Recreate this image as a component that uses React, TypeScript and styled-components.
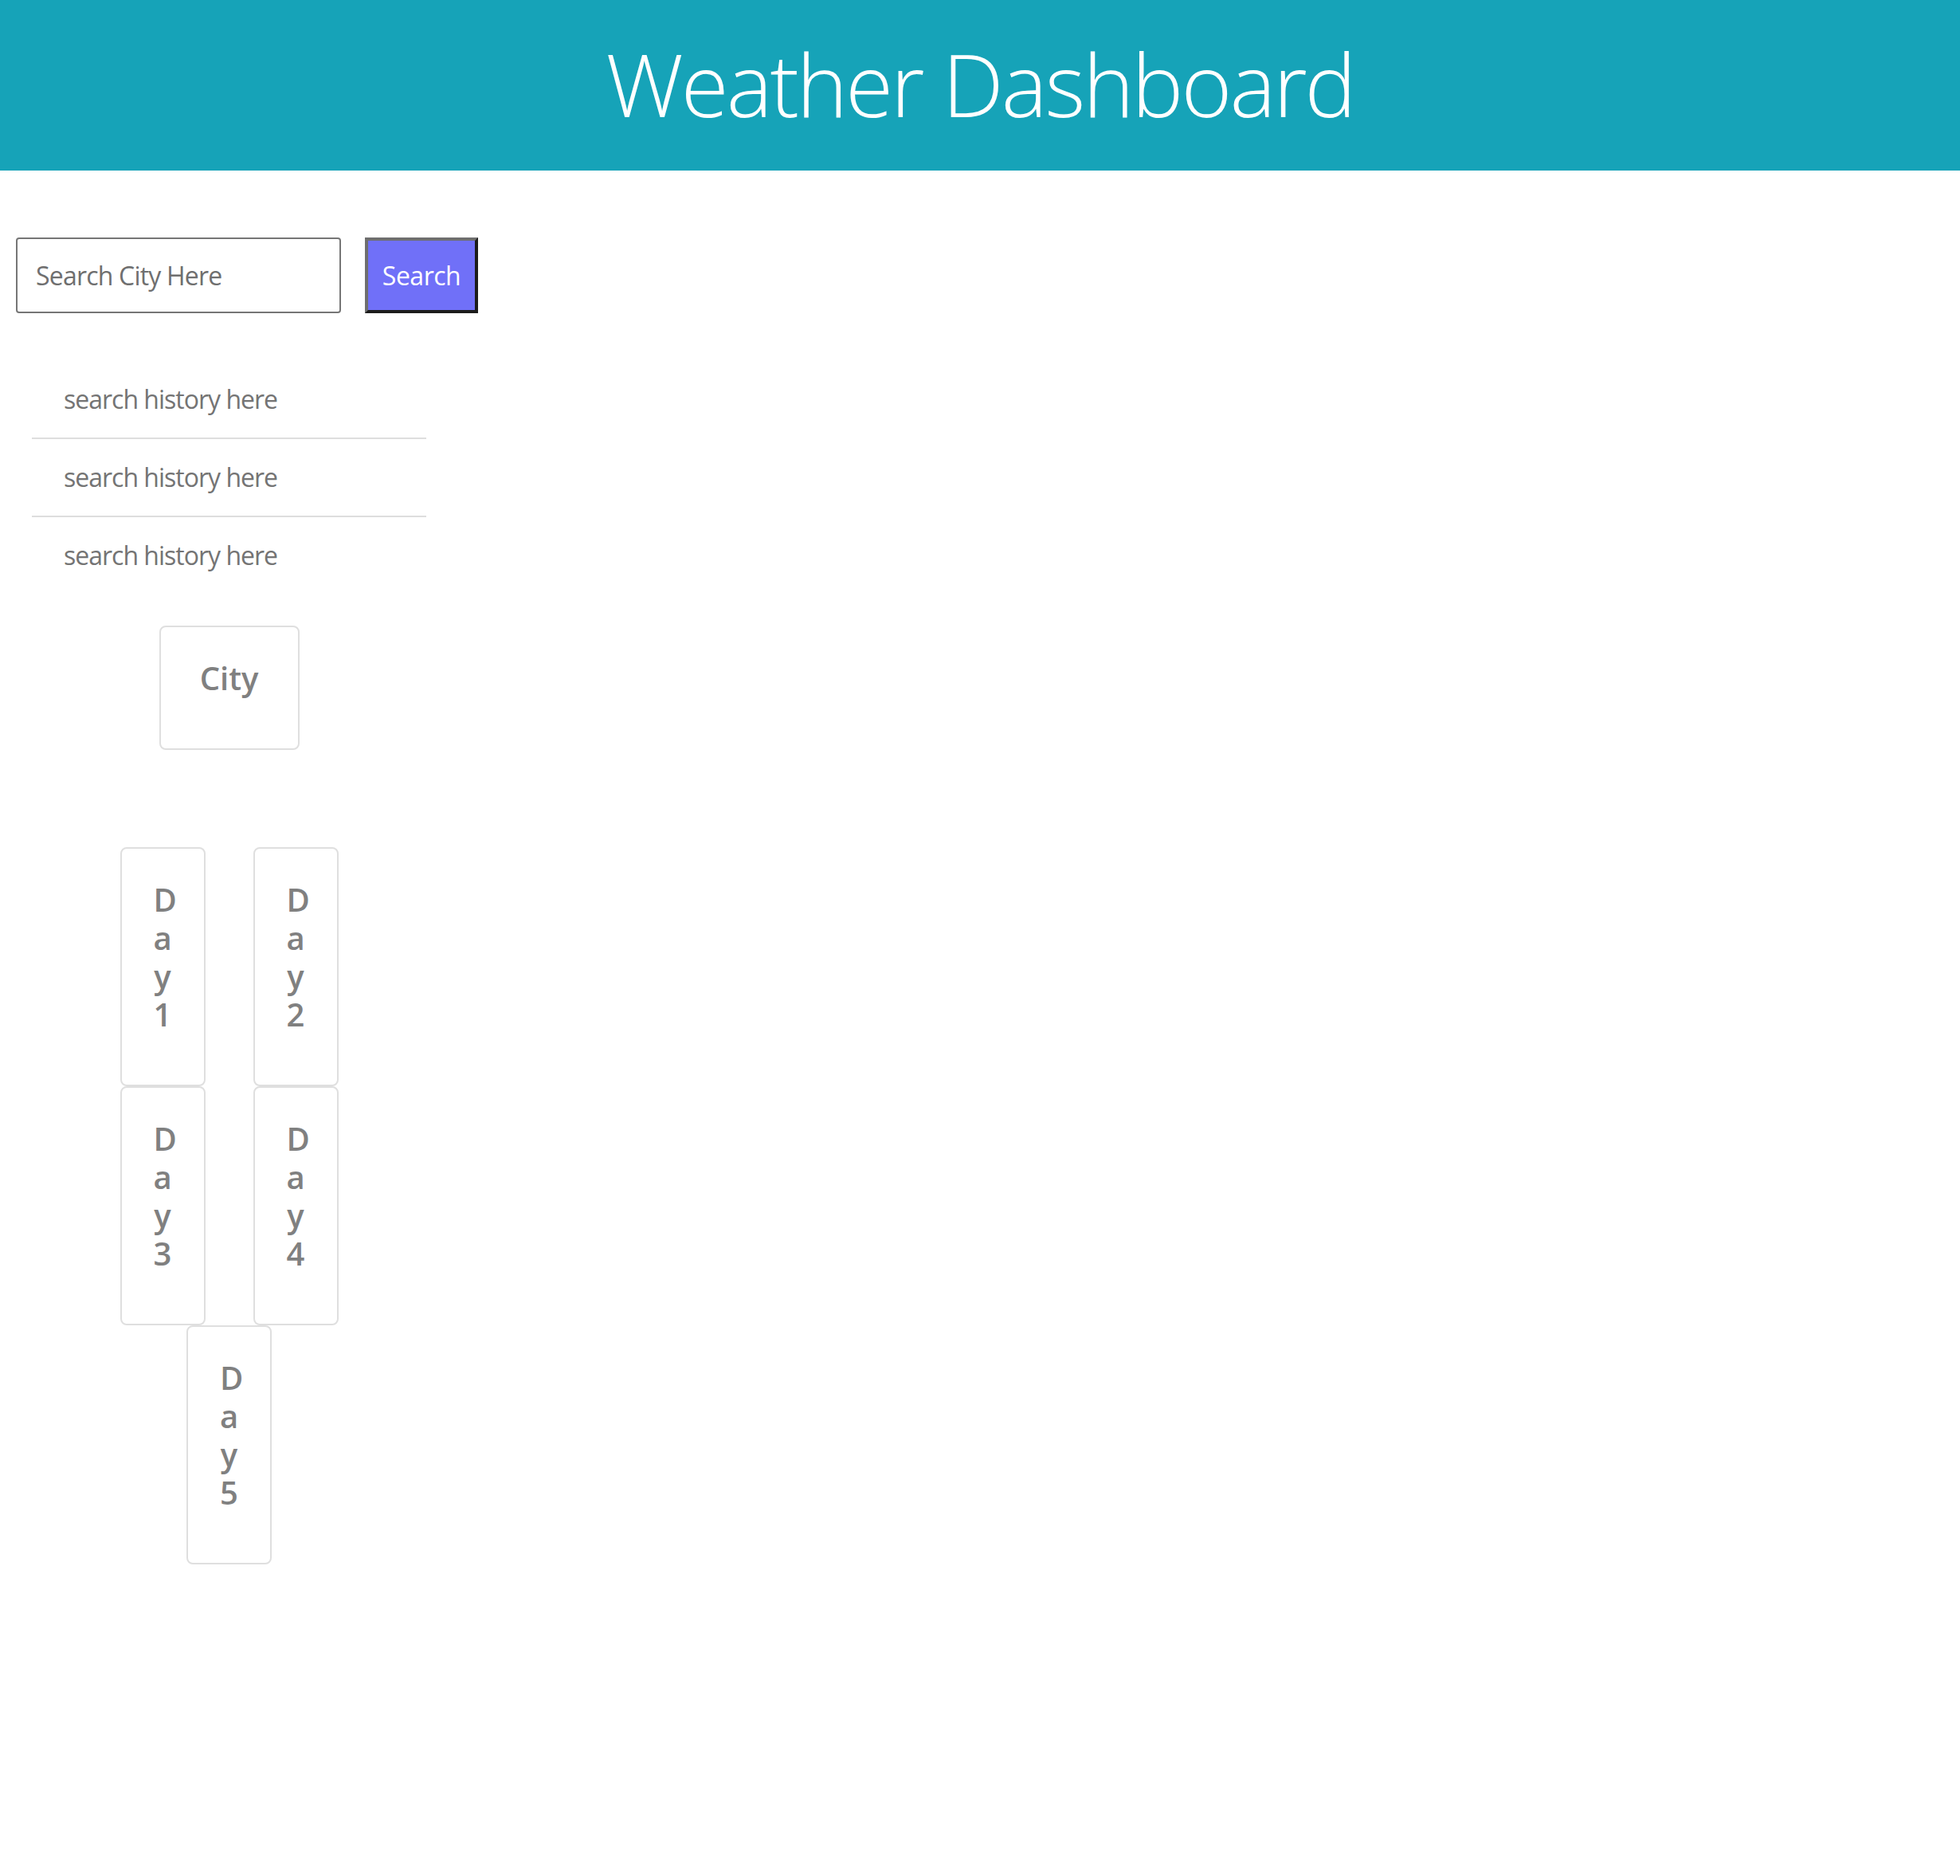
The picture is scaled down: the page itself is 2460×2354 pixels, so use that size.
import React from "react";
import styled, { createGlobalStyle } from "styled-components";

const GlobalStyle = createGlobalStyle`
  html, body {
    margin: 0;
    padding: 0;
    background: #ffffff;
  }
  body {
    font-family: "Open Sans", "Noto Sans", "Liberation Sans", sans-serif;
  }
  * {
    box-sizing: border-box;
  }
`;

const Header = styled.header`
  height: 214px;
  background: #16a3b8;
  display: flex;
  align-items: center;
  justify-content: center;
`;

const Title = styled.h1`
  margin: 0;
  padding-bottom: 4px;
  color: #ffffff;
  font-size: 109px;
  font-weight: 300;
  line-height: 1.2;
  letter-spacing: -3px;
`;

const Main = styled.main`
  padding: 84px 20px 120px;
`;

const SearchRow = styled.form`
  display: flex;
  gap: 30px;
  align-items: stretch;
`;

const CityInput = styled.input`
  width: 408px;
  height: 95px;
  border: 2px solid #767676;
  border-radius: 4px;
  padding: 0 23px;
  font-family: inherit;
  font-size: 32px;
  letter-spacing: -0.8px;
  color: #495057;
  outline: none;
  &::placeholder {
    color: #6f6f6f;
  }
`;

const SearchButton = styled.button`
  width: 142px;
  height: 95px;
  border-style: solid;
  border-width: 4px;
  border-color: #6f6f6f #1c1c1c #1c1c1c #6f6f6f;
  background: #7070f8;
  color: #ffffff;
  font-family: inherit;
  font-size: 32px;
  letter-spacing: -0.5px;
  padding: 0;
  cursor: pointer;
`;

const Column = styled.section`
  width: 495px;
  margin-left: 20px;
  display: flex;
  flex-direction: column;
  align-items: center;
`;

const HistoryList = styled.ul`
  list-style: none;
  margin: 60px 0 0;
  padding: 0;
  width: 100%;
`;

const HistoryItem = styled.li`
  padding: 24px 40px;
  font-size: 32px;
  line-height: 48px;
  letter-spacing: -1px;
  color: #747474;
  border-bottom: 2px solid #dedede;
  &:last-child {
    border-bottom: none;
  }
`;

const Card = styled.div<{ $w: number }>`
  width: ${(p) => p.$w}px;
  border: 2px solid #dfdfdf;
  border-radius: 8px;
  padding: 40px;
  background: #ffffff;
  text-align: center;
`;

const CardTitle = styled.h5`
  margin: 0 0 24px;
  font-size: 40px;
  line-height: 48px;
  font-weight: 600;
  color: #808080;
  word-break: break-all;
`;

const CityWrap = styled.div`
  margin-top: 40px;
`;

const DaysGrid = styled.div`
  margin-top: 122px;
  width: 100%;
  display: flex;
  flex-wrap: wrap;
  justify-content: center;
`;

const DayCard = styled(Card)`
  margin: 0 30px;
`;

export default function App() {
  const history = ["search history here", "search history here", "search history here"];
  const days = ["Day 1", "Day 2", "Day 3", "Day 4", "Day 5"];
  return (
    <>
      <GlobalStyle />
      <Header>
        <Title>Weather Dashboard</Title>
      </Header>
      <Main>
        <SearchRow onSubmit={(e) => e.preventDefault()}>
          <CityInput type="text" placeholder="Search City Here" />
          <SearchButton type="submit">Search</SearchButton>
        </SearchRow>
        <Column>
          <HistoryList>
            {history.map((h, i) => (
              <HistoryItem key={i}>{h}</HistoryItem>
            ))}
          </HistoryList>
          <CityWrap>
            <Card $w={176}>
              <CardTitle>City</CardTitle>
            </Card>
          </CityWrap>
          <DaysGrid>
            {days.map((d) => (
              <DayCard key={d} $w={107}>
                <CardTitle>{d}</CardTitle>
              </DayCard>
            ))}
          </DaysGrid>
        </Column>
      </Main>
    </>
  );
}
